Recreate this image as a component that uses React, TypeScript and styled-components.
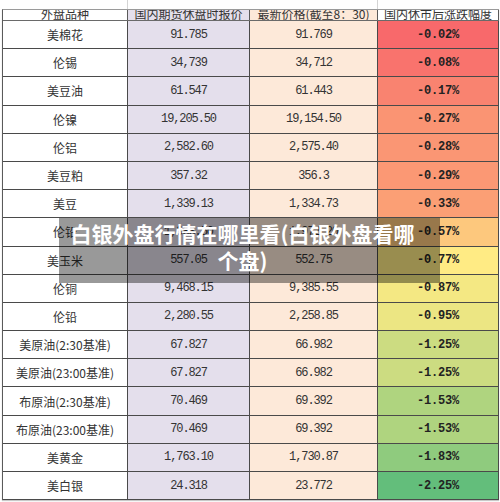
import * as React from 'react';
import styled, { createGlobalStyle } from 'styled-components';

const GlobalStyle = createGlobalStyle`
	html, body {
		margin: 0;
		padding: 0;
		background: #ffffff;
	}
	* {
		box-sizing: border-box;
	}
`;

const COLS = '125px 122px 128px 121px';

const Page = styled.div`
	position: relative;
	width: 500px;
	height: 502px;
	overflow: hidden;
	background: #ffffff;
	padding-left: 2px;
`;

// 表格上方残留的一截
const TopStrip = styled.div`
	display: grid;
	grid-template-columns: ${COLS};
	height: 9px;
	padding-left: 1px;
`;

const StripCell = styled.div<{ $line?: boolean }>`
	border-right: 1px solid ${(p) => (p.$line ? '#d4d4d4' : 'transparent')};
`;

const Table = styled.div`
	width: 497px;
	border-left: 1px solid #5a5a5a;
	border-top: 1px solid #9a9a9a;
	box-shadow: 0 1px 1px #c8c8c8;
`;

const HeaderRow = styled.div`
	display: grid;
	grid-template-columns: ${COLS};
	height: 11px;
	border-bottom: 1px solid #6a6a6a;
`;

const HeaderCell = styled.div<{ $bg: string }>`
	background: ${(p) => p.$bg};
	border-right: 1px solid #5a5a5a;
	overflow: hidden;
	font-family: 'Noto Sans CJK SC', sans-serif;
	font-size: 12px;
	line-height: 8px;
	color: #333333;
	text-align: center;
	white-space: nowrap;
`;

const Row = styled.div`
	display: grid;
	grid-template-columns: ${COLS};
	height: 28.2px;
	border-bottom: 1px solid #4a4a4a;
`;

const Cell = styled.div<{ $bg: string }>`
	background: ${(p) => p.$bg};
	border-right: 1px solid #4a4a4a;
	display: flex;
	align-items: center;
	justify-content: center;
	white-space: nowrap;
	color: #333333;
`;

const NameCell = styled(Cell)`
	font-family: 'Noto Sans CJK SC', sans-serif;
	font-size: 12px;
`;

const NumCell = styled(Cell)`
	font-family: 'Liberation Mono', monospace;
	font-size: 12px;
	letter-spacing: -1.1px;
`;

const PctCell = styled(Cell)`
	font-family: 'Liberation Mono', monospace;
	font-size: 12px;
	font-weight: 700;
	letter-spacing: -0.2px;
	color: #222222;
`;

// 标题遮罩
const Overlay = styled.div`
	position: absolute;
	left: 59px;
	top: 218px;
	width: 381px;
	height: 65px;
	background: rgba(0, 0, 0, 0.4);
	padding: 2px 18px 0 4px;
	color: #ffffff;
	font-family: 'Noto Sans CJK SC', sans-serif;
	font-weight: 700;
	font-size: 21px;
	line-height: 27px;
	text-align: center;
`;

type Item = { name: string; close: string; latest: string; pct: number };

const items: Item[] = [
	{ name: '美棉花', close: '91.785', latest: '91.769', pct: -0.02 },
	{ name: '伦锡', close: '34,739', latest: '34,712', pct: -0.08 },
	{ name: '美豆油', close: '61.547', latest: '61.443', pct: -0.17 },
	{ name: '伦镍', close: '19,205.50', latest: '19,154.50', pct: -0.27 },
	{ name: '伦铝', close: '2,582.60', latest: '2,575.40', pct: -0.28 },
	{ name: '美豆粕', close: '357.32', latest: '356.3', pct: -0.29 },
	{ name: '美豆', close: '1,339.13', latest: '1,334.73', pct: -0.33 },
	{ name: '伦铅', close: '1,983.50', latest: '1,972.20', pct: -0.57 },
	{ name: '美玉米', close: '557.05', latest: '552.75', pct: -0.77 },
	{ name: '伦铜', close: '9,468.15', latest: '9,385.55', pct: -0.87 },
	{ name: '伦铅', close: '2,280.55', latest: '2,258.85', pct: -0.95 },
	{ name: '美原油(2:30基准)', close: '67.827', latest: '66.982', pct: -1.25 },
	{ name: '美原油(23:00基准)', close: '67.827', latest: '66.982', pct: -1.25 },
	{ name: '布原油(2:30基准)', close: '70.469', latest: '69.392', pct: -1.53 },
	{ name: '布原油(23:00基准)', close: '70.469', latest: '69.392', pct: -1.53 },
	{ name: '美黄金', close: '1,763.10', latest: '1,730.87', pct: -1.83 },
	{ name: '美白银', close: '24.318', latest: '23.772', pct: -2.25 },
];

// excel 三色刻度: 绿 - 黄 - 红
const RED = [248, 105, 107];
const YELLOW = [255, 235, 132];
const GREEN = [99, 190, 123];

const mix = (a: number[], b: number[], t: number) =>
	`rgb(${a.map((v, i) => Math.round(v + (b[i] - v) * t)).join(',')})`;

const scaleColor = (v: number) => {
	const max = -0.02;
	const mid = -0.77;
	const min = -2.25;
	if (v >= mid) return mix(YELLOW, RED, (v - mid) / (max - mid));
	return mix(YELLOW, GREEN, (mid - v) / (mid - min));
};

const LAVENDER = '#e4dfec';
const PEACH = '#fde9d9';

const App = () => {
	return (
		<Page>
			<GlobalStyle />
			<TopStrip>
				<StripCell $line />
				<StripCell />
				<StripCell $line />
				<StripCell />
			</TopStrip>
			<Table>
				<HeaderRow>
					<HeaderCell $bg="#ffffff">外盘品种</HeaderCell>
					<HeaderCell $bg={LAVENDER}>国内期货休盘时报价</HeaderCell>
					<HeaderCell $bg={PEACH}>最新价格(截至8：30)</HeaderCell>
					<HeaderCell $bg="#ffffff">国内休市后涨跌幅度</HeaderCell>
				</HeaderRow>
				{items.map((it, i) => (
					<Row key={i}>
						<NameCell $bg="#ffffff">{it.name}</NameCell>
						<NumCell $bg={LAVENDER}>{it.close}</NumCell>
						<NumCell $bg={PEACH}>{it.latest}</NumCell>
						<PctCell $bg={scaleColor(it.pct)}>{it.pct.toFixed(2)}%</PctCell>
					</Row>
				))}
			</Table>
			<Overlay>白银外盘行情在哪里看(白银外盘看哪个盘)</Overlay>
		</Page>
	);
};

export default App;
